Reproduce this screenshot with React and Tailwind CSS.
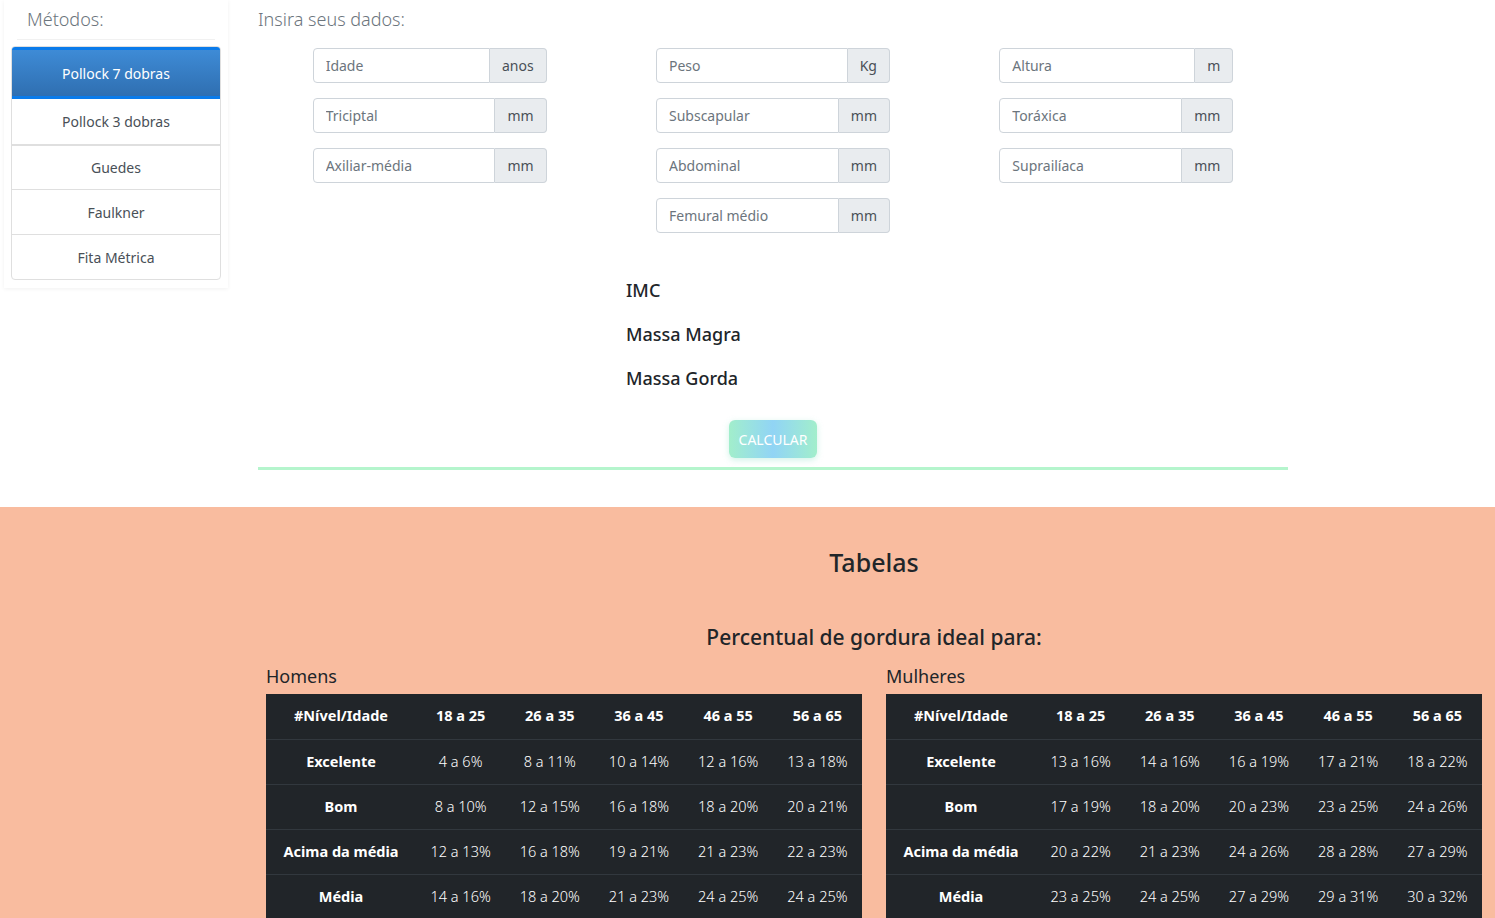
import React from "react";

const font = { fontFamily: "'Segoe UI', 'Noto Sans', 'Open Sans', sans-serif" };

const metodos = ["Pollock 7 dobras", "Pollock 3 dobras", "Guedes", "Faulkner", "Fita Métrica"];

const colunas = [
  [
    { label: "Idade", unit: "anos" },
    { label: "Triciptal", unit: "mm" },
    { label: "Axiliar-média", unit: "mm" },
  ],
  [
    { label: "Peso", unit: "Kg" },
    { label: "Subscapular", unit: "mm" },
    { label: "Abdominal", unit: "mm" },
    { label: "Femural médio", unit: "mm" },
  ],
  [
    { label: "Altura", unit: "m" },
    { label: "Toráxica", unit: "mm" },
    { label: "Suprailíaca", unit: "mm" },
  ],
];

const idades = ["18 a 25", "26 a 35", "36 a 45", "46 a 55", "56 a 65"];

const homens = [
  ["Excelente", "4 a 6%", "8 a 11%", "10 a 14%", "12 a 16%", "13 a 18%"],
  ["Bom", "8 a 10%", "12 a 15%", "16 a 18%", "18 a 20%", "20 a 21%"],
  ["Acima da média", "12 a 13%", "16 a 18%", "19 a 21%", "21 a 23%", "22 a 23%"],
  ["Média", "14 a 16%", "18 a 20%", "21 a 23%", "24 a 25%", "24 a 25%"],
];

const mulheres = [
  ["Excelente", "13 a 16%", "14 a 16%", "16 a 19%", "17 a 21%", "18 a 22%"],
  ["Bom", "17 a 19%", "18 a 20%", "20 a 23%", "23 a 25%", "24 a 26%"],
  ["Acima da média", "20 a 22%", "21 a 23%", "24 a 26%", "28 a 28%", "27 a 29%"],
  ["Média", "23 a 25%", "24 a 25%", "27 a 29%", "29 a 31%", "30 a 32%"],
];

function Campo({ label, unit }) {
  return (
    <div className="flex w-[234px] h-[35px] text-[14px]">
      <input
        type="text"
        placeholder={label}
        className="flex-1 min-w-0 h-full px-3 border border-[#ced4da] rounded-l-[4px] bg-white text-[#495057] placeholder:text-[#6c757d] outline-none"
      />
      <span className="h-full px-3 flex items-center border border-l-0 border-[#ced4da] rounded-r-[4px] bg-[#e9ecef] text-[#495057]">
        {unit}
      </span>
    </div>
  );
}

function Tabela({ titulo, linhas }) {
  return (
    <div className="w-[596px]">
      <h4 className="text-[18px] text-[#212529] leading-[24px] mb-[6px]">{titulo}</h4>
      <table className="w-full border-collapse bg-[#212529] text-white text-[14.5px]">
        <thead>
          <tr className="h-[45px]">
            <th className="w-[150px] font-bold text-center">#Nível/Idade</th>
            {idades.map((i) => (
              <th key={i} className="font-bold text-center">
                {i}
              </th>
            ))}
          </tr>
        </thead>
        <tbody>
          {linhas.map((l) => (
            <tr key={l[0]} className="h-[45px] border-t border-[#32383e]">
              <th className="font-bold text-center">{l[0]}</th>
              {l.slice(1).map((v, k) => (
                <td key={k} className="text-center font-light">
                  {v}
                </td>
              ))}
            </tr>
          ))}
        </tbody>
      </table>
    </div>
  );
}

export default function App() {
  return (
    <div className="min-h-screen bg-white text-[#212529]" style={font}>
      <div className="flex">
        <aside className="w-[224px] ml-[4px] shrink-0 self-start shadow-[0_1px_4px_rgba(0,0,0,0.06)] pb-[8px]">
          <div className="mx-[13px] h-[40px] pl-[10px] pt-[6px] border-b border-[#f1f1f1] text-[18px] font-light text-[#6c757d]">
            Métodos:
          </div>
          <ul className="mx-[7px] mt-[6px] border border-[#dfdfdf] rounded-[4px] overflow-hidden text-[14px]">
            {metodos.map((m, i) =>
              i === 0 ? (
                <li
                  key={m}
                  className="h-[52px] flex items-center justify-center text-white border-y-[3px] border-[#0a7bea] bg-gradient-to-b from-[#3e8bd6] to-[#2f6fb1]"
                >
                  {m}
                </li>
              ) : (
                <li
                  key={m}
                  className={`h-[45px] flex items-center justify-center text-[#495057] ${i > 1 ? "border-t border-[#dfdfdf]" : ""} ${i === 2 ? "border-t-2" : ""}`}
                >
                  {m}
                </li>
              )
            )}
          </ul>
        </aside>

        <main className="ml-[30px] w-[1030px]">
          <h3 className="pt-[7px] text-[18px] font-light text-[#6c757d] leading-[24px]">Insira seus dados:</h3>
          <div className="grid grid-cols-3 mt-[17px]">
            {colunas.map((col, c) => (
              <div key={c} className="flex flex-col items-center gap-[15px]">
                {col.map((f) => (
                  <Campo key={f.label} {...f} />
                ))}
              </div>
            ))}
          </div>

          <div className="pl-[368px] mt-[44px] flex flex-col gap-[18px] text-[18px] font-medium leading-[26px] text-[#212529]">
            <p>IMC</p>
            <p>Massa Magra</p>
            <p>Massa Gorda</p>
          </div>

          <div className="flex justify-center mt-[29px]">
            <button
              type="button"
              className="w-[88px] h-[38px] rounded-[6px] text-[14px] text-white shadow-[0_2px_6px_rgba(120,220,190,0.35)] bg-gradient-to-r from-[#a2eecb] via-[#91d4f5] to-[#a2eecb]"
            >
              CALCULAR
            </button>
          </div>
          <div className="mt-[9px] h-[3px] bg-[#b5f5cd]" />
        </main>
      </div>

      <section className="mt-[37px] bg-[#f9bc9f] h-[411px] overflow-hidden">
        <div className="pl-[266px] pr-[13px]">
          <h2 className="pt-[39px] text-center text-[25px] font-medium leading-[32px] text-[#212529]">Tabelas</h2>
          <h3 className="mt-[44px] text-center text-[21px] font-medium leading-[30px] text-[#212529]">
            Percentual de gordura ideal para:
          </h3>
          <div className="flex gap-[24px] mt-[12px]">
            <Tabela titulo="Homens" linhas={homens} />
            <Tabela titulo="Mulheres" linhas={mulheres} />
          </div>
        </div>
      </section>
    </div>
  );
}
